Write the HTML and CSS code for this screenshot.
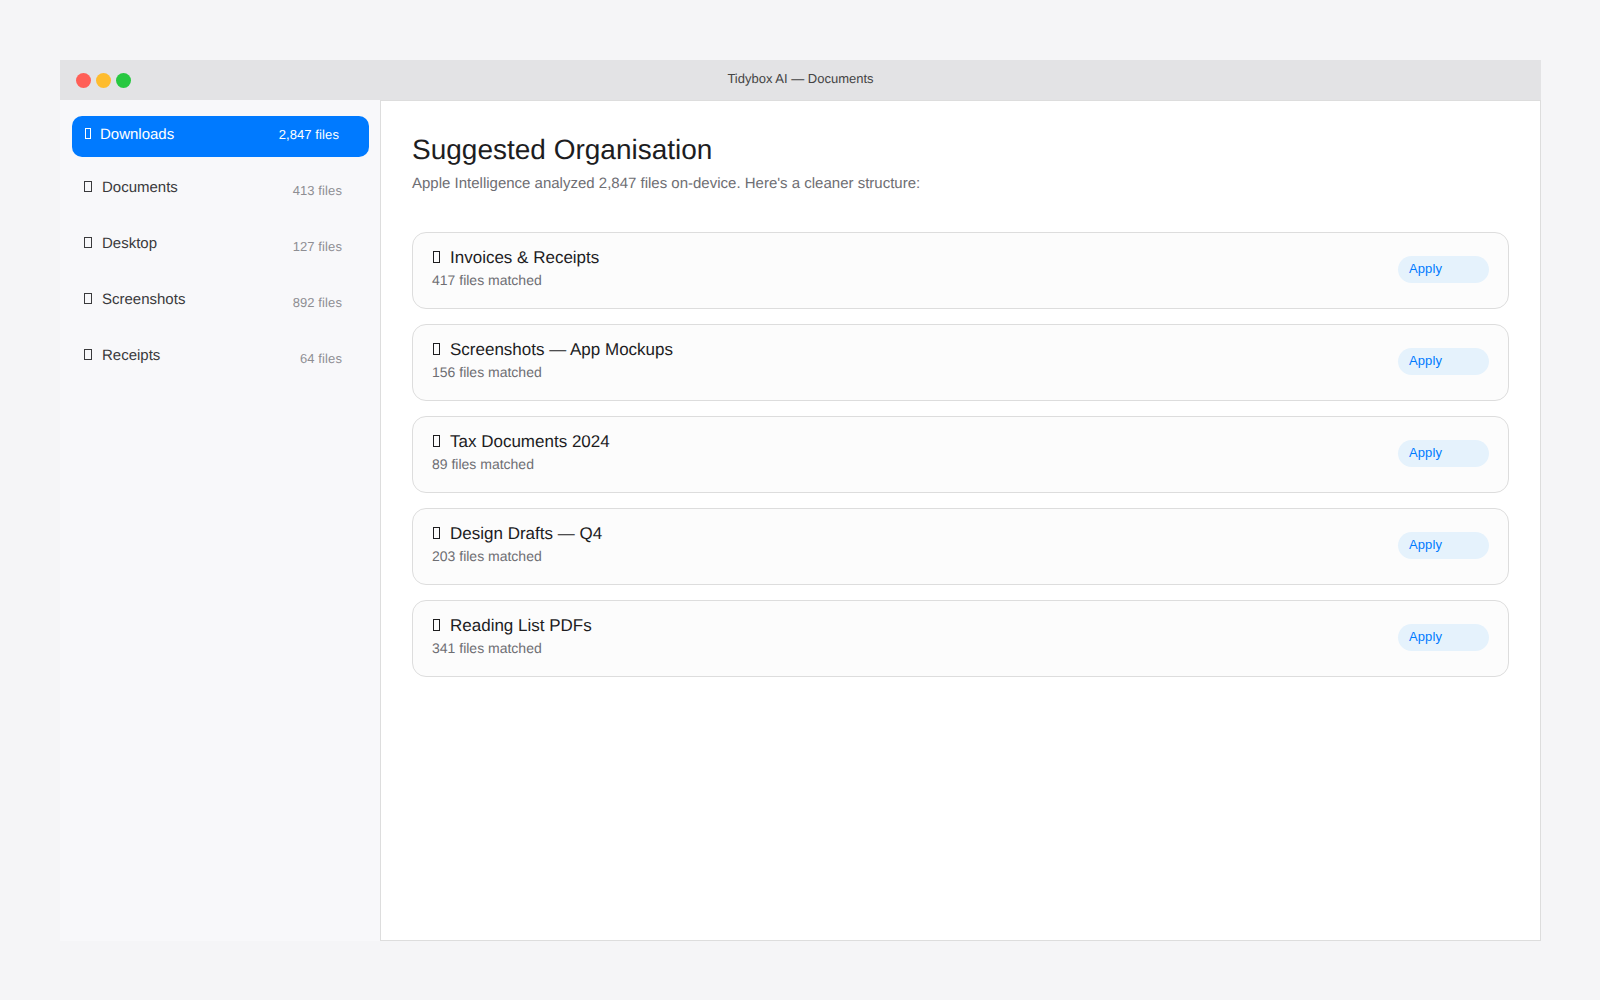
FILE: index.html
```html
<!DOCTYPE html>
<html lang="en">
<head>
  <meta charset="UTF-8" />
  <title>Tidybox AI — Documents</title>
  <link rel="stylesheet" href="styles.css">
</head>
<body>
  <div class="window">
    <!-- title bar -->
    <div class="titlebar">
      <div class="lights">
        <span class="light red"></span>
        <span class="light yellow"></span>
        <span class="light green"></span>
      </div>
      <div class="window-title">Tidybox AI — Documents</div>
    </div>
    <div class="window-body">
      <div class="sidebar">
        <div class="side-item active">
          <span class="side-name"><i class="tofu"></i>Downloads</span>
          <span class="side-count">2,847 files</span>
        </div>
        <div class="side-item">
          <span class="side-name"><i class="tofu"></i>Documents</span>
          <span class="side-count">413 files</span>
        </div>
        <div class="side-item">
          <span class="side-name"><i class="tofu"></i>Desktop</span>
          <span class="side-count">127 files</span>
        </div>
        <div class="side-item">
          <span class="side-name"><i class="tofu"></i>Screenshots</span>
          <span class="side-count">892 files</span>
        </div>
        <div class="side-item">
          <span class="side-name"><i class="tofu"></i>Receipts</span>
          <span class="side-count">64 files</span>
        </div>
      </div>
      <div class="main">
        <h1>Suggested Organisation</h1>
        <p class="subtitle">Apple Intelligence analyzed 2,847 files on-device. Here's a cleaner structure:</p>
        <div class="card-list">
          <div class="card">
            <div class="card-text">
              <div class="card-title"><i class="tofu"></i>Invoices &amp; Receipts</div>
              <div class="card-meta">417 files matched</div>
            </div>
            <button class="apply-btn">Apply</button>
          </div>
          <div class="card">
            <div class="card-text">
              <div class="card-title"><i class="tofu"></i>Screenshots — App Mockups</div>
              <div class="card-meta">156 files matched</div>
            </div>
            <button class="apply-btn">Apply</button>
          </div>
          <div class="card">
            <div class="card-text">
              <div class="card-title"><i class="tofu"></i>Tax Documents 2024</div>
              <div class="card-meta">89 files matched</div>
            </div>
            <button class="apply-btn">Apply</button>
          </div>
          <div class="card">
            <div class="card-text">
              <div class="card-title"><i class="tofu"></i>Design Drafts — Q4</div>
              <div class="card-meta">203 files matched</div>
            </div>
            <button class="apply-btn">Apply</button>
          </div>
          <div class="card">
            <div class="card-text">
              <div class="card-title"><i class="tofu"></i>Reading List PDFs</div>
              <div class="card-meta">341 files matched</div>
            </div>
            <button class="apply-btn">Apply</button>
          </div>
        </div>
      </div>
    </div>
  </div>
</body>
</html>
```

FILE: styles.css
```css
body {
  margin: 0;
  padding: 60px;
  background: #f5f5f7;
  font-family: 'Liberation Sans', sans-serif;
  color: #1d1d1f;
  text-rendering: geometricPrecision;
}
.window {
  width: 1481px;
  height: 881px;
  display: flex;
  flex-direction: column;
}
/* title bar */
.titlebar {
  height: 40px;
  flex-shrink: 0;
  box-sizing: border-box;
  background: #e3e3e5;
  display: grid;
  grid-template-columns: 1fr auto 1fr;
  align-items: center;
  padding: 0 16px;
}
.lights {
  display: flex;
  gap: 5px;
}
.light {
  width: 15px;
  height: 15px;
  border-radius: 50%;
}
.red { background: #ff5f57; }
.yellow { background: #febc2e; }
.green { background: #28c840; }
.window-title {
  font-size: 13px;
  color: #444;
  margin-bottom: 4px;
}
.window-body {
  flex: 1;
  display: flex;
  min-height: 0;
}
/* missing-glyph box the emoji icons show up as */
.tofu {
  display: inline-block;
  box-sizing: border-box;
  width: 8px;
  height: 11px;
  margin-right: 10px;
  border: 1.5px solid currentColor;
  vertical-align: 0;
}
/* sidebar */
.sidebar {
  width: 320px;
  flex-shrink: 0;
  box-sizing: border-box;
  background: #f8f8fa;
  padding: 16px 11px 0 12px;
}
.side-item {
  display: flex;
  justify-content: space-between;
  align-items: flex-start;
  height: 56px;
  box-sizing: border-box;
  padding: 18px 27px 0 12px;
  font-size: 15px;
  color: #3a3a3c;
}
.side-count {
  margin-top: 4px;
  font-size: 13px;
  letter-spacing: 0.1px;
  color: #8e8e93;
}
.side-item.active {
  height: 41px;
  margin-bottom: 4px;
  padding: 8px 30px 13px 12px;
  background: #007aff;
  border-radius: 10px;
  color: #fff;
  align-items: center;
}
.side-item.active .tofu {
  width: 6px;
  margin-left: 1px;
  margin-right: 9px;
  border-width: 1px;
}
.side-item.active .side-count {
  margin-top: 0;
  color: #fff;
}
/* main panel */
.main {
  flex: 1;
  background: #fff;
  border: 1px solid #ddd;
  padding: 33px 31px;
}
h1 {
  margin: 0;
  font-size: 28px;
  font-weight: 400;
}
.subtitle {
  margin: 9px 0 40px;
  font-size: 15px;
  color: #6e6e73;
}
.card-list {
  display: flex;
  flex-direction: column;
  gap: 15px;
}
.card {
  height: 77px;
  box-sizing: border-box;
  display: flex;
  align-items: center;
  justify-content: space-between;
  padding: 0 19px;
  background: #fcfcfc;
  border: 1px solid #ddd;
  border-radius: 14px;
}
.card-text {
  margin-bottom: 6px;
}
.card-title {
  font-size: 17px;
  margin-bottom: 4px;
}
.card-title .tofu {
  width: 7px;
  height: 12px;
  margin-left: 1px;
  margin-right: 10px;
}
.card-meta {
  font-size: 14px;
  color: #6e6e73;
}
.apply-btn {
  width: 91px;
  height: 27px;
  margin-bottom: 2px;
  border: none;
  border-radius: 14px;
  background: #e5f2fc;
  color: #007aff;
  font-family: inherit;
  font-size: 13px;
  letter-spacing: 0.1px;
  text-align: left;
  padding: 0 11px 2px;
}
```
